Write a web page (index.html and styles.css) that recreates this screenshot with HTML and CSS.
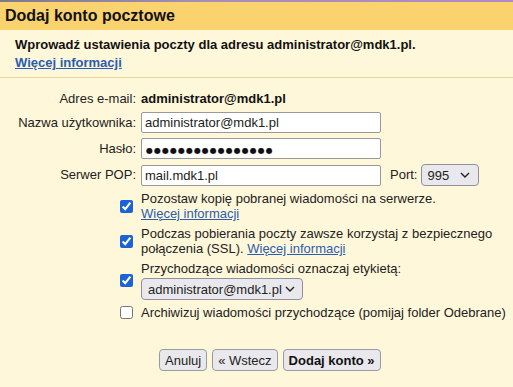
FILE: index.html
```html
<!DOCTYPE html>
<html lang="pl">
<head>
<meta charset="utf-8">
<title>Dodaj konto pocztowe</title>
<link rel="stylesheet" href="styles.css">
</head>
<body>
<div class="topline"></div>
<header class="header"><h1 class="title">Dodaj konto pocztowe</h1></header>
<section class="info">
  <div class="info-text">Wprowadź ustawienia poczty dla adresu administrator@mdk1.pl.</div>
  <a class="info-link" href="#">Więcej informacji</a>
</section>
<form class="form">
  <div class="grid">
    <div class="label r1">Adres e-mail:</div>
    <div class="value r1"><b>administrator@mdk1.pl</b></div>

    <label class="label">Nazwa użytkownika:</label>
    <div class="value"><input class="field" type="text" value="administrator@mdk1.pl"></div>

    <label class="label">Hasło:</label>
    <div class="value"><input class="field field-pass" type="text" value="●●●●●●●●●●●●●●●●"></div>

    <label class="label">Serwer POP:</label>
    <div class="value port-row">
      <input class="field" type="text" value="mail.mdk1.pl">
      <span class="port-label">Port:</span>
      <select class="sel sel-port"><option>995</option></select>
    </div>

    <div class="cb-cell"><input class="cb" type="checkbox" checked></div>
    <div class="cb-text">Pozostaw kopię pobranej wiadomości na serwerze.<br><a class="link" href="#">Więcej informacji</a></div>

    <div class="cb-cell"><input class="cb" type="checkbox" checked></div>
    <div class="cb-text">Podczas pobierania poczty zawsze korzystaj z bezpiecznego<br>połączenia (SSL). <a class="link" href="#">Więcej informacji</a></div>

    <div class="cb-cell"><input class="cb" type="checkbox" checked></div>
    <div class="cb-text">Przychodzące wiadomości oznaczaj etykietą:<br><select class="sel sel-label"><option>administrator@mdk1.pl</option></select></div>

    <div class="cb-cell"><input class="cb" type="checkbox"></div>
    <div class="cb-text">Archiwizuj wiadomości przychodzące (pomijaj folder Odebrane)</div>
  </div>
  <div class="buttons">
    <button type="button" class="btn">Anuluj</button>
    <button type="button" class="btn">« Wstecz</button>
    <button type="button" class="btn btn-primary">Dodaj konto »</button>
  </div>
</form>
</body>
</html>
```
FILE: styles.css
```css
html, body {
  margin: 0;
  padding: 0;
}
body {
  background: #fff7da;
  font-family: "Liberation Sans", Arial, sans-serif;
  font-size: 13px;
  color: #222;
  width: 513px;
  height: 387px;
  overflow: hidden;
}
.topline {
  height: 2px;
  background: linear-gradient(to right, #7d7a8a, #a48fb8 40%, #b38ac8);
}
.header {
  background: #fad26e;
  height: 28px;
  display: flex;
  align-items: center;
  padding-left: 5px;
}
.title {
  margin: 0;
  font-size: 16px;
  font-weight: bold;
  color: #111;
}
.info {
  padding: 6px 15px 5px;
  border-bottom: 1px solid #ecd99a;
  line-height: 18px;
  font-weight: bold;
}
.info-text {
  color: #111;
}
.info-link {
  color: #2a5db0;
  text-decoration: underline;
}
.form {
  padding-top: 13px;
}
.grid {
  display: grid;
  grid-template-columns: 136px auto;
  column-gap: 5px;
  row-gap: 5px;
  align-items: center;
}
.label {
  text-align: right;
  line-height: 16px;
}
.value {
  line-height: 16px;
  display: flex;
  align-items: center;
}
.value b {
  color: #111;
}
.field {
  width: 240px;
  height: 21px;
  box-sizing: border-box;
  border: 1px solid #999;
  border-radius: 2px;
  padding: 0 3px;
  font-family: "Liberation Sans", Arial, sans-serif;
  font-size: 13px;
  color: #222;
  background: #fff;
  margin: 0;
  outline: none;
}
.field-pass {
  font-family: "DejaVu Sans", sans-serif;
  font-size: 8px;
  letter-spacing: 1px;
  padding: 3px 4px 0;
  color: #111;
}
.port-row {
  gap: 0;
}
.port-label {
  margin-left: 9px;
  margin-right: 4px;
}
.sel {
  appearance: none;
  -webkit-appearance: none;
  height: 22px;
  box-sizing: border-box;
  border: 1px solid #8f8f9d;
  border-radius: 4px;
  background-color: #e9e9ed;
  background-image: url("data:image/svg+xml;utf8,<svg xmlns='http://www.w3.org/2000/svg' width='10' height='6' viewBox='0 0 10 6'><path d='M1 1 L5 5 L9 1' fill='none' stroke='%23222' stroke-width='1.4'/></svg>");
  background-repeat: no-repeat;
  font-family: "Liberation Sans", Arial, sans-serif;
  font-size: 13px;
  color: #222;
  margin: 0;
}
.sel-port {
  width: 58px;
  padding: 0 0 0 5px;
  background-position: right 8px center;
}
.sel-label {
  width: 162px;
  padding: 0 0 0 6px;
  margin-top: 2px;
  background-position: right 7px center;
}
.cb-cell {
  display: flex;
  justify-content: flex-end;
}
.cb {
  margin: 0 3px 0 0;
  width: 13px;
  height: 13px;
  accent-color: #1a62d6;
}
.cb-text {
  line-height: 15px;
}
.link {
  color: #2a5db0;
  text-decoration: underline;
}
.buttons {
  display: flex;
  gap: 5px;
  padding-left: 159px;
  margin-top: 29px;
}
.btn {
  height: 22px;
  box-sizing: border-box;
  padding: 0 5px;
  border: 1px solid #9a9aa5;
  border-radius: 4px;
  background: #e9e9ed;
  font-family: "Liberation Sans", Arial, sans-serif;
  font-size: 13px;
  color: #222;
  margin: 0;
}
.btn-primary {
  font-weight: bold;
  color: #111;
}
```
